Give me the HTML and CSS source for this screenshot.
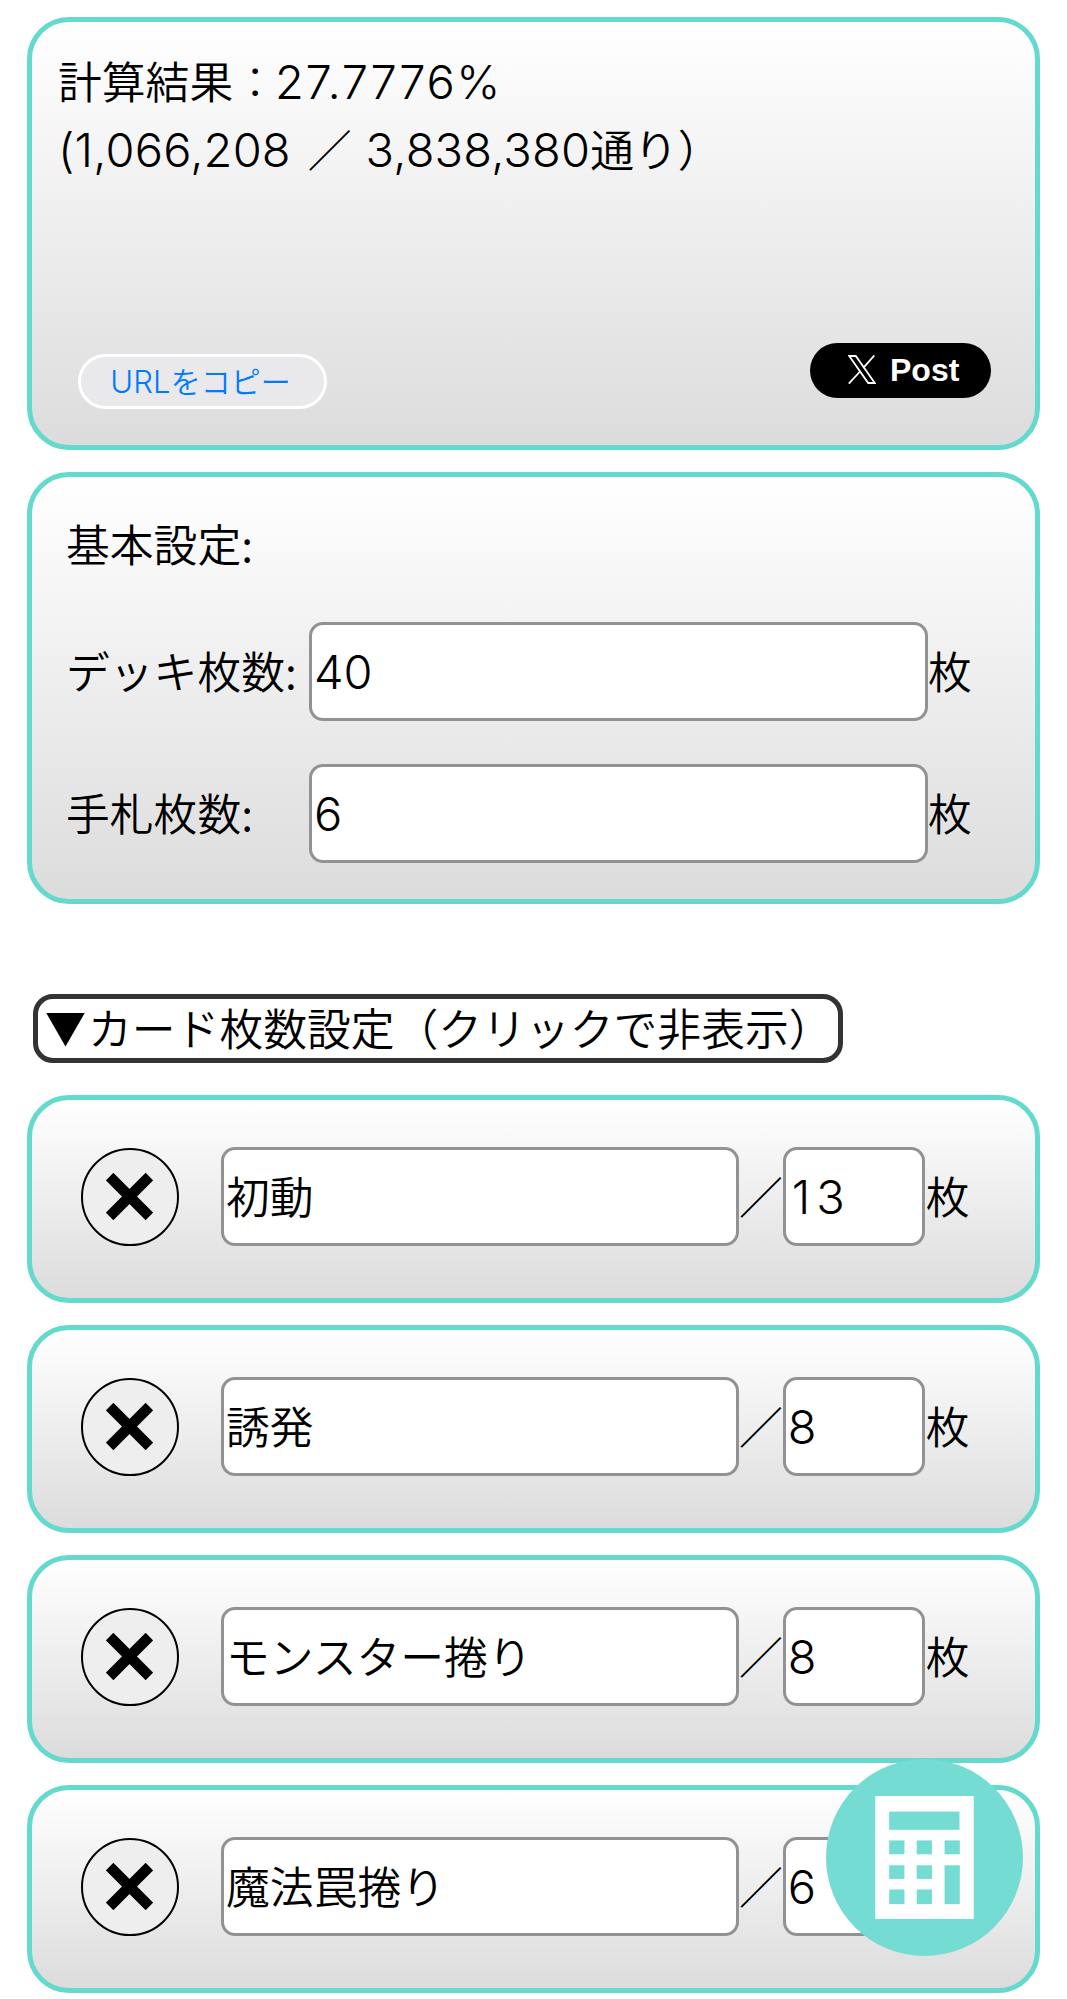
FILE: index.html
```html
<!DOCTYPE html>
<html lang="ja">
<head>
    <meta charset="utf-8">
    <meta name="viewport" content="width=device-width, initial-scale=1">
    <title>初動率計算</title>
    <link rel="stylesheet" href="styles.css">
</head>
<body>
    <div class="box result">
        <div class="result-text">
            <div>計算結果<span class="colon">：</span><span class="num rate">27.7776%</span></div>
            <div><span class="num">(1,066,208</span><span class="slash">／</span><span class="num">3,838,380</span>通り）</div>
        </div>
        <div class="share">
            <button type="button" class="copy"><span class="num">URL</span>をコピー</button>
            <button type="button" class="post">
                <svg class="x-logo" viewBox="0 0 28 29">
                    <path d="M1.2 1h6.6l19 27h-6.6z"/>
                    <path d="M26.3 .5L15.3 12.8M12.5 16L.8 28.6"/>
                </svg>
                Post
            </button>
        </div>
    </div>

    <div class="box basic">
        <div class="title">基本設定:</div>
        <div class="row">
            <label for="deck">デッキ枚数:</label>
            <input type="text" id="deck" class="number" value="40"><span class="unit">枚</span>
        </div>
        <div class="row">
            <label for="hand">手札枚数:</label>
            <input type="text" id="hand" class="number" value="6"><span class="unit">枚</span>
        </div>
    </div>

    <button type="button" class="toggle"><span class="arrow"></span><span class="unit">カード枚数設定（クリックで非表示）</span></button>

    <div class="box card">
        <button type="button" class="remove"><svg viewBox="0 0 46 46"><path d="M3.5 3.5l39 39M42.5 3.5l-39 39"/></svg></button>
        <input type="text" class="name" value="初動"><span class="unit per">／</span><input type="text" class="number count one" value="13"><span class="unit">枚</span>
    </div>
    <div class="box card">
        <button type="button" class="remove"><svg viewBox="0 0 46 46"><path d="M3.5 3.5l39 39M42.5 3.5l-39 39"/></svg></button>
        <input type="text" class="name" value="誘発"><span class="unit per">／</span><input type="text" class="number count" value="8"><span class="unit">枚</span>
    </div>
    <div class="box card">
        <button type="button" class="remove"><svg viewBox="0 0 46 46"><path d="M3.5 3.5l39 39M42.5 3.5l-39 39"/></svg></button>
        <input type="text" class="name" value="モンスター捲り"><span class="unit per">／</span><input type="text" class="number count" value="8"><span class="unit">枚</span>
    </div>
    <div class="box card">
        <button type="button" class="remove"><svg viewBox="0 0 46 46"><path d="M3.5 3.5l39 39M42.5 3.5l-39 39"/></svg></button>
        <input type="text" class="name" value="魔法罠捲り"><span class="unit per">／</span><input type="text" class="number count" value="6"><span class="unit">枚</span>
    </div>
    <div class="line"></div>

    <!-- floating calculate button -->
    <button type="button" class="calc">
        <svg viewBox="0 0 297 371">
            <rect class="body" width="297" height="371"/>
            <rect x="42" y="47" width="212" height="55"/>
            <rect x="42" y="134" width="46" height="42"/>
            <rect x="125" y="134" width="46" height="42"/>
            <rect x="209" y="134" width="46" height="42"/>
            <rect x="42" y="209" width="46" height="41"/>
            <rect x="125" y="209" width="46" height="41"/>
            <rect x="42" y="282" width="46" height="44"/>
            <rect x="125" y="282" width="46" height="44"/>
            <rect x="209" y="209" width="46" height="117"/>
        </svg>
    </button>
</body>
</html>
```
FILE: styles.css
```css
* {
  box-sizing: border-box;
}
body {
  margin: 0;
  padding: 17px 27px 0;
  background: #fff;
  color: #000;
  font-family: "Noto Sans CJK JP", sans-serif;
  font-size: 43.8px;
  font-weight: 350;
  line-height: 68px;
}
button, input {
  margin: 0;
  padding: 0;
  color: #000;
  font: inherit;
}
.num, .number {
  font-family: Inter, "Noto Sans CJK JP", sans-serif;
  font-size: 47px;
  font-weight: 300;
}
.num {
  letter-spacing: 0.2px;
  line-height: 1;
}
.colon {
  font-weight: 300;
}
.rate {
  margin-left: -2px;
  letter-spacing: 1.6px;
}
.box {
  width: 1013px;
  border: 5px solid #64d9cd;
  border-radius: 42px;
  background: linear-gradient(#fff, #dcdcdc);
}

/* result */
.result {
  display: flex;
  flex-direction: column;
  justify-content: space-between;
  height: 433px;
  margin-bottom: 22px;
  padding: 24px 44px 36px 26px;
}
.result-text {
  white-space: nowrap;
}
.result-text div {
  height: 68px;
}
.slash {
  margin: 0 14px 0 17px;
  font-weight: 400;
}
.share {
  display: flex;
  justify-content: space-between;
  padding-left: 20px;
}
.copy {
  width: 249px;
  height: 55px;
  margin-top: 11px;
  padding: 0 4px 4px 0;
  border: 3px solid #fff;
  border-radius: 28px;
  background: #e9e9ec;
  color: #007aff;
  font-size: 30px;
  line-height: 44px;
}
.copy .num {
  font-size: 31px;
}
.post {
  display: flex;
  align-items: center;
  width: 181px;
  height: 55px;
  padding: 0 0 2px 38px;
  border: 0;
  border-radius: 28px;
  background: #000;
  color: #fff;
  font-family: "Liberation Sans", sans-serif;
  font-size: 32px;
  font-weight: bold;
}
.x-logo {
  width: 28px;
  height: 29px;
  margin-right: 14px;
  fill: none;
  stroke: #fff;
  stroke-width: 1.8;
}

/* inputs */
input {
  height: 99px;
  border: 3px solid #929296;
  border-radius: 14px;
  background: #fff;
}

/* basic settings */
.basic {
  height: 432px;
  padding: 32px 34px 0;
}
.title {
  height: 113px;
}
.row {
  display: flex;
  align-items: center;
  margin-bottom: 43px;
}
.row label {
  width: 243px;
  padding-bottom: 4px;
}
.unit {
  padding-bottom: 4px;
}
.row input {
  width: 619px;
  padding-left: 2px;
}

.toggle {
  display: flex;
  align-items: center;
  width: 810px;
  height: 69px;
  margin: 90px 0 32px 6px;
  padding-left: 8px;
  border: 5px solid #333;
  border-radius: 20px;
  background: #fff;
  white-space: nowrap;
}
.arrow {
  width: 39px;
  height: 34px;
  margin: 2px 3px 0 0;
  background: #000;
  clip-path: polygon(0 0, 100% 0, 50% 100%);
}

/* card rows */
.card {
  display: flex;
  align-items: center;
  height: 208px;
  margin-bottom: 22px;
  padding: 0 0 5px 49px;
}
.remove {
  display: flex;
  align-items: center;
  justify-content: center;
  width: 98px;
  height: 98px;
  margin-right: 42px;
  padding-right: 1px;
  border: 2px solid #000;
  border-radius: 50%;
  background: #eee;
}
.remove svg {
  width: 47px;
  height: 47px;
  stroke: #000;
  stroke-width: 10.5;
}
.name {
  width: 518px;
  padding: 0 0 4px 2px;
}
.per {
  font-weight: 400;
}
.count {
  width: 142px;
  margin-right: 1px;
  padding-left: 2px;
}
.one {
  padding-left: 6px;
  letter-spacing: 6px;
}
.line {
  height: 1px;
  margin: -16px -27px 0;
  background: #d4d4d4;
}

.calc {
  display: flex;
  align-items: center;
  justify-content: center;
  position: fixed;
  top: 1759px;
  right: 44px;
  width: 197px;
  height: 197px;
  border: 0;
  border-radius: 50%;
  background: #74dcd3;
}
.calc svg {
  width: 99px;
  height: 123px;
  fill: #74dcd3;
}
.calc .body {
  fill: #fff;
}
```
